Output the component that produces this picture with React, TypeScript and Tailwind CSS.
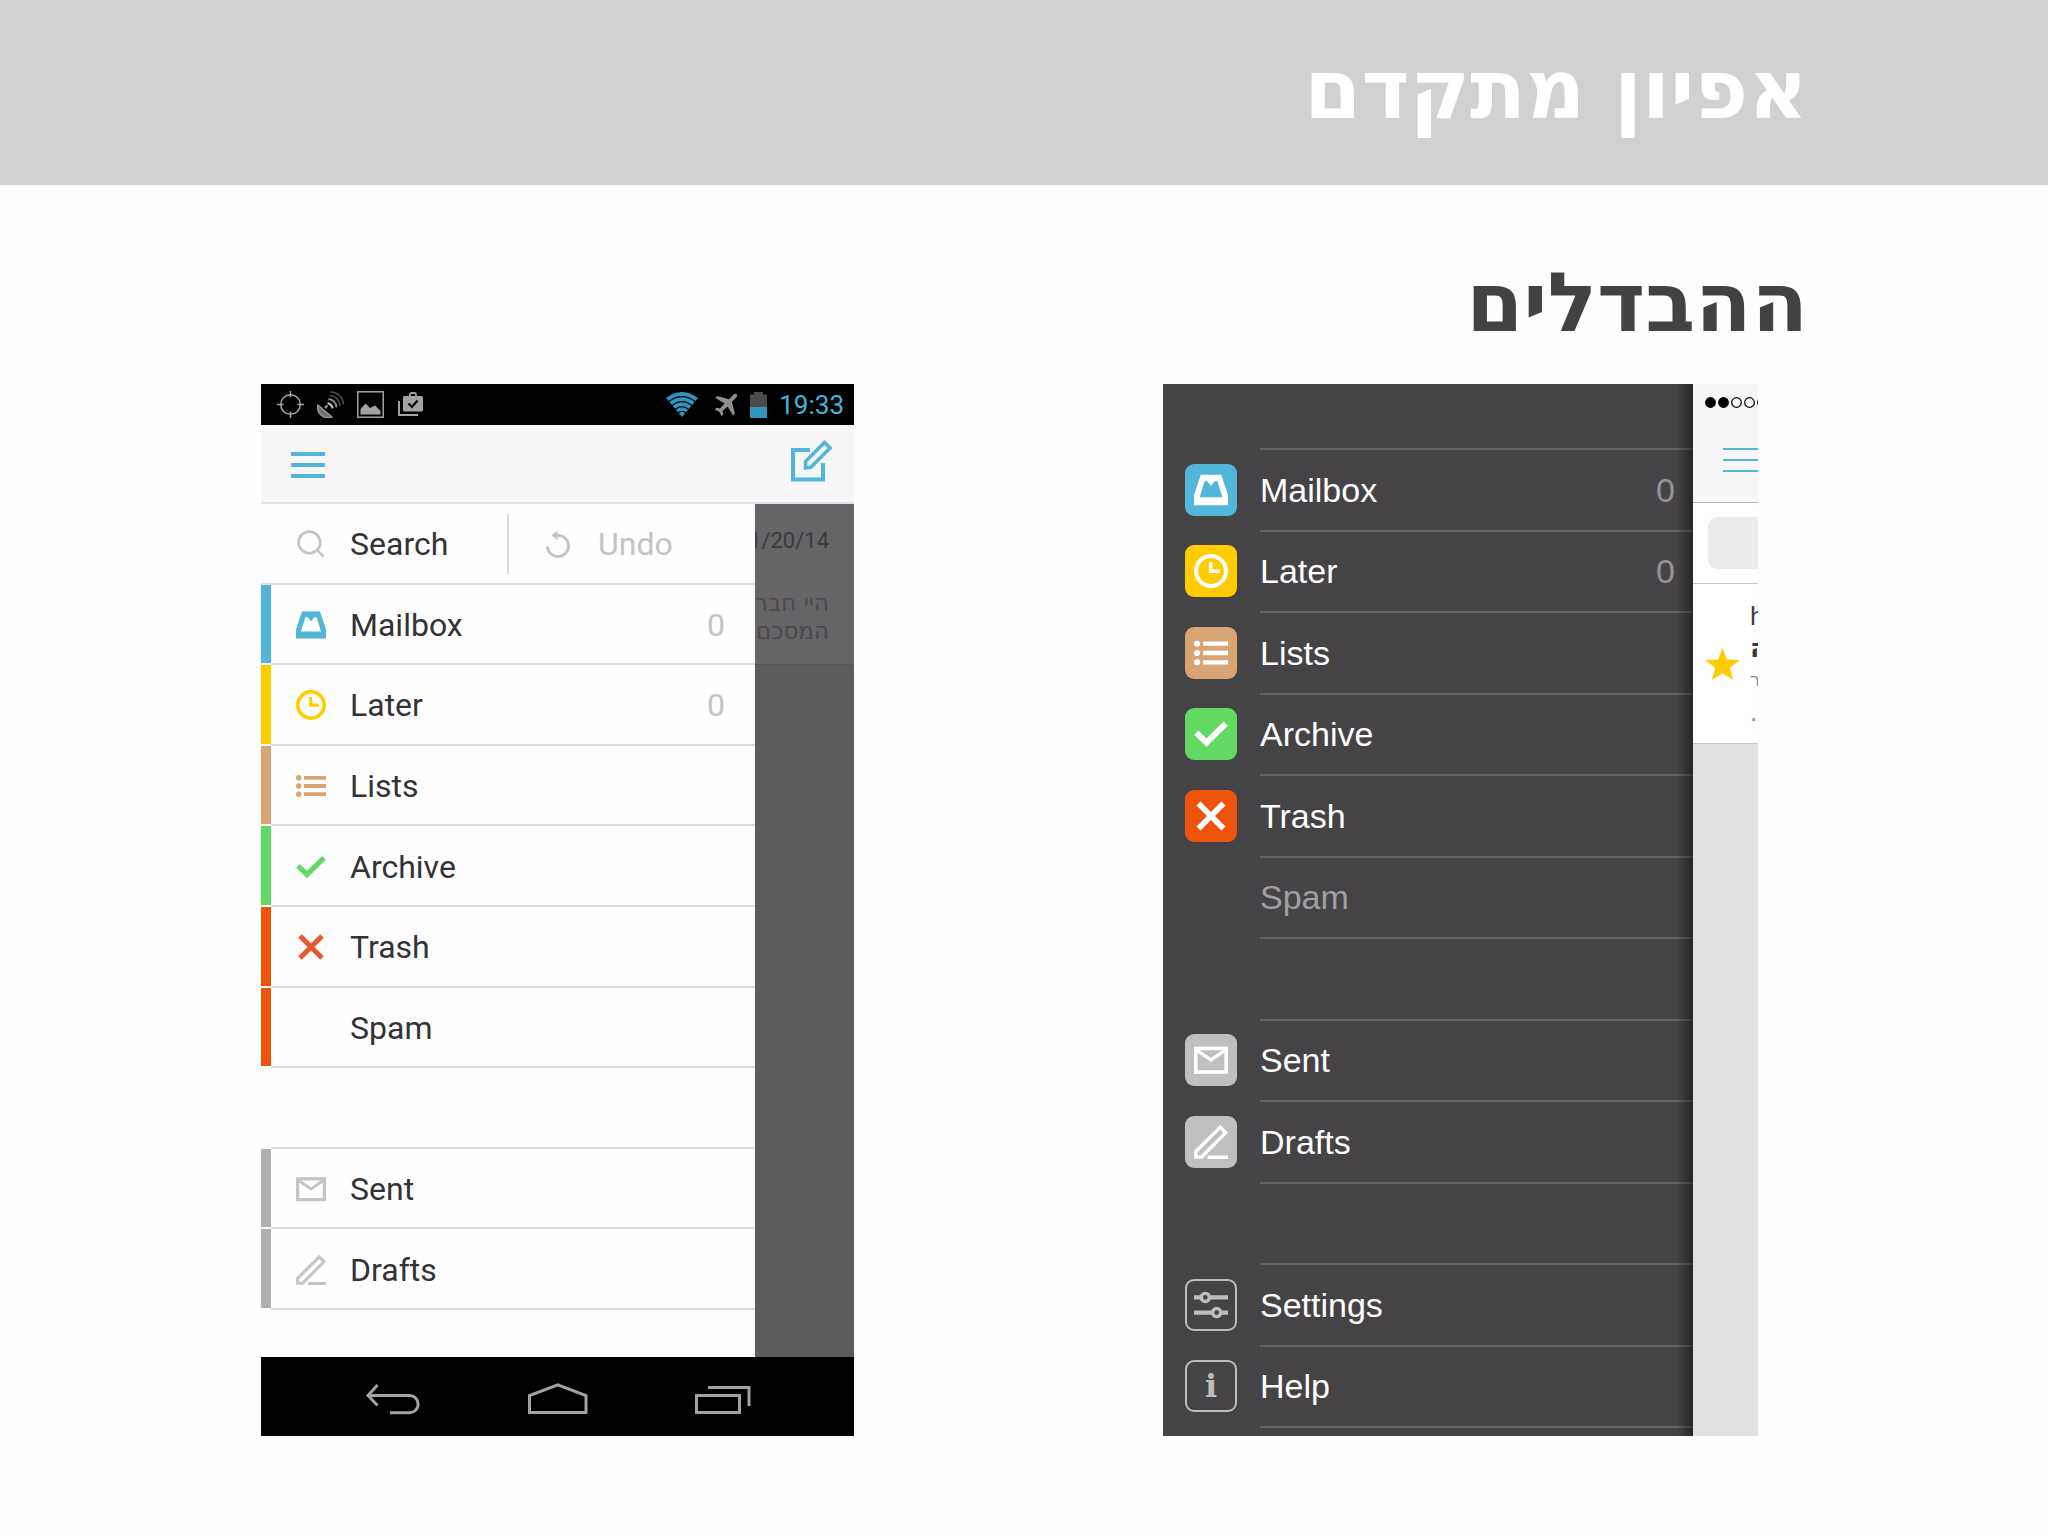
import React from 'react';

type IconName = 'mailbox' | 'clock' | 'list' | 'check' | 'cross' | 'envelope' | 'pencil' | 'sliders';

interface MenuItem {
  label: string;
  icon?: IconName;
  tone: string;
  count?: number;
}

const GlyphIcon: React.FC<{ name: IconName; className?: string }> = ({ name, className }) => (
  <svg viewBox="0 0 30 30" fill="none" stroke="currentColor" className={className} aria-hidden="true">
    {name === 'mailbox' && (
      <path
        d="M6 1.6H24L30 19.5V28.4H0V19.5ZM9.3 7.2L5 21.5H25L20.7 7.2H18.4L15 11.3L11.6 7.2Z"
        fill="currentColor"
        fillRule="evenodd"
        stroke="none"
      />
    )}
    {name === 'clock' && (
      <>
        <circle cx="15" cy="15" r="13.2" strokeWidth="3.6" />
        <path d="M14.7 7V15.2H23" strokeWidth="3.2" />
      </>
    )}
    {name === 'list' && (
      <>
        <path d="M8 6.8H30M8 15H30M8 23.2H30" strokeWidth="3.8" />
        <g fill="currentColor" stroke="none">
          <circle cx="2.7" cy="6.8" r="2.7" />
          <circle cx="2.7" cy="15" r="2.7" />
          <circle cx="2.7" cy="23.2" r="2.7" />
        </g>
      </>
    )}
    {name === 'check' && <path d="M2 13.8L11 22.6L28 5.8" strokeWidth="5.2" />}
    {name === 'cross' && <path d="M4 4L26 26M26 4L4 26" strokeWidth="5" />}
    {name === 'envelope' && (
      <>
        <rect x="1.6" y="4.8" width="26.8" height="20.8" strokeWidth="3.2" />
        <path d="M2 6L15 15L28 6" strokeWidth="3" />
      </>
    )}
    {name === 'pencil' && (
      <path d="M1.6 28.2V23.4L23.2 1.9L28 6.7L6.6 28.2ZM12 28.4H30" strokeWidth="3" />
    )}
    {name === 'sliders' && (
      <>
        <path d="M0 8.3H6.4M13.6 8.3H30M0 21.7H16.4M23.6 21.7H30" strokeWidth="3.6" />
        <circle cx="10" cy="8.3" r="3.6" strokeWidth="3" />
        <circle cx="20" cy="21.7" r="3.6" strokeWidth="3" />
      </>
    )}
  </svg>
);

const androidItems: (MenuItem | null)[] = [
  { label: 'Mailbox', icon: 'mailbox', tone: 'border-[#52b5da] text-[#52b5da]', count: 0 },
  { label: 'Later', icon: 'clock', tone: 'border-[#ffcc00] text-[#ffcc00]', count: 0 },
  { label: 'Lists', icon: 'list', tone: 'border-[#d8a474] text-[#d8a474]' },
  { label: 'Archive', icon: 'check', tone: 'border-[#62d962] text-[#62d962]' },
  { label: 'Trash', icon: 'cross', tone: 'border-[#ef540c] text-[#e8582a]' },
  { label: 'Spam', tone: 'border-[#ef540c]' },
  null,
  { label: 'Sent', icon: 'envelope', tone: 'border-[#b1b0b1] text-[#c4c3c5]' },
  { label: 'Drafts', icon: 'pencil', tone: 'border-[#b1b0b1] text-[#c4c3c5]' },
];

const iosItems: (MenuItem | null)[] = [
  { label: 'Mailbox', icon: 'mailbox', tone: 'bg-[#52b5da] text-white', count: 0 },
  { label: 'Later', icon: 'clock', tone: 'bg-[#ffcc00] text-white', count: 0 },
  { label: 'Lists', icon: 'list', tone: 'bg-[#d8a474] text-white' },
  { label: 'Archive', icon: 'check', tone: 'bg-[#62d962] text-white' },
  { label: 'Trash', icon: 'cross', tone: 'bg-[#ef540c] text-white' },
  { label: 'Spam', tone: '' },
  null,
  { label: 'Sent', icon: 'envelope', tone: 'bg-[#bfbec0] text-white' },
  { label: 'Drafts', icon: 'pencil', tone: 'bg-[#bfbec0] text-white' },
  null,
  { label: 'Settings', icon: 'sliders', tone: 'border-2 border-[#bdbcbe] text-[#bdbcbe]' },
  { label: 'Help', tone: 'border-2 border-[#bdbcbe] text-[#bdbcbe]' },
];

const AndroidStatusBar = () => (
  <div className="flex h-[41px] items-center justify-between bg-black pl-4 pr-2.5">
    <div className="flex items-center gap-[13px] text-[#a3a3a3]">
      <svg viewBox="0 0 27 27" className="size-[27px]" fill="none" stroke="currentColor" strokeWidth="1.5">
        <circle cx="13.5" cy="13.5" r="9.8" />
        <path d="M13.5 0V6.5M13.5 20.5V27M0 13.5H6.5M20.5 13.5H27" />
      </svg>
      <svg viewBox="0 0 27 27" className="size-[27px]" fill="none" stroke="currentColor">
        <path d="M1 14C-1 22 6 28.5 15 26Z" fill="#6f6f6f" strokeWidth="1.2" />
        <path d="M8 17L10.5 14.5" strokeWidth="2" />
        <path d="M10.5 12.2Q15 13 15.6 17.4" stroke="#c9c9c9" strokeWidth="2" />
        <path d="M11.5 8Q18.5 9 19.6 16.4" stroke="#8d8d8d" strokeWidth="1.8" />
        <path d="M12.6 4.2Q22 5.5 23.2 15M13.5 .8Q25.5 2 26.6 13.6" stroke="#4a4a4a" strokeWidth="1.6" />
      </svg>
      <svg viewBox="0 0 27 27" className="size-[27px]" fill="none" stroke="currentColor">
        <rect x=".8" y=".8" width="25.4" height="25.4" strokeWidth="1.5" />
        <path d="M3.5 23.5V18L8.5 12.5L13 17L18 14.5L23.5 20V23.5Z" fill="currentColor" stroke="none" />
      </svg>
      <svg viewBox="0 0 27 27" className="size-[27px]" fill="none" stroke="currentColor">
        <path d="M2 10V24H21" strokeWidth="2" />
        <path d="M13 5V3.5Q13 2 14.5 2H17.5Q19 2 19 3.5V5" strokeWidth="1.8" />
        <rect x="6" y="5" width="20" height="15.5" rx="1.5" fill="currentColor" stroke="none" />
        <path d="M11.5 12.5L15 16L20.5 9.5" stroke="black" strokeWidth="2.2" />
      </svg>
    </div>
    <div className="flex items-center">
      <svg viewBox="0 0 32 25" className="mr-4 h-[25px] w-8" fill="#3095bf">
        <path d="M16 25L0 6Q16 -6 32 6Z" />
        <g fill="none" stroke="black" strokeWidth="1.2">
          <path d="M2.5 9.8Q16 -.5 29.5 9.8" />
          <path d="M5.8 13.8Q16 5.5 26.2 13.8" />
          <path d="M9 17.6Q16 11.6 23 17.6" />
          <path d="M12 21Q16 17.5 20 21" />
        </g>
      </svg>
      <svg viewBox="0 0 24 24" className="mr-3 size-6" fill="#8f8d8f">
        <path d="M22.8 1.2Q21.2 .2 19.4 1.8L15 6.2L3.4 3L1.4 5L10.6 10.4L6 15.4L2.4 14.8L.8 16.4L5.2 18.8L7.6 23.2L9.2 21.6L8.6 18L13.6 13.4L19 22.6L21 20.6L17.8 9L22.2 4.6Q23.8 2.8 22.8 1.2Z" />
      </svg>
      <svg viewBox="0 0 17 26" className="mr-3 h-[26px] w-[17px]">
        <path d="M0 2.5H4V0H13V2.5H17V15H0Z" fill="#4d4a4c" />
        <path d="M0 15H17V26H0Z" fill="#3095bf" />
      </svg>
      <span className="text-[26px] leading-8 text-[#40b5df]">19:33</span>
    </div>
  </div>
);

const AndroidPhone = () => (
  <section className="flex w-[593px] shrink-0 flex-col bg-black font-['Roboto',sans-serif]">
    <AndroidStatusBar />
    <div className="flex h-[79px] items-center justify-between border-b-2 border-[#e3e1e5] bg-[#f7f7f9] pl-[30px] pr-[21px] pt-0.5">
      <button type="button" aria-label="Menu" className="flex w-[34px] flex-col gap-[7px]">
        <span className="h-1 bg-[#52b5da]" />
        <span className="h-1 bg-[#52b5da]" />
        <span className="h-1 bg-[#52b5da]" />
      </button>
      <button type="button" aria-label="Compose" className="mb-2">
        <svg viewBox="0 0 42 42" className="size-[42px]" fill="none" stroke="#52b5da" strokeWidth="4">
          <path d="M19 10H2V39.5H32V23" />
          <path d="M14.5 28V21.5L33.5 2.5L39 8L19.8 27.2Z" strokeWidth="3.6" />
        </svg>
      </button>
    </div>
    <div className="flex h-[853px]">
      <div className="w-[494px] bg-[#fefefe] text-[32px] leading-10 text-[#333236]">
        <ul className="grid h-[806px] grid-rows-10">
          <li className="flex items-center border-b-2 border-[#dcdbde] pt-0.5">
            <button type="button" className="flex h-full w-[246px] items-center pl-9">
              <svg viewBox="0 0 28 28" className="mr-[25px] size-7" fill="none" stroke="#c4c3c5" strokeWidth="2.6">
                <circle cx="12.4" cy="12.4" r="10.8" />
                <path d="M20 20L26.6 26.6" />
              </svg>
              Search
            </button>
            <span className="h-[60px] w-0.5 bg-[#dddbe0]" />
            <button type="button" disabled className="flex h-full items-center pl-9 text-[#c4c3c5]">
              <svg viewBox="0 0 28 28" className="mr-[25px] size-7" fill="none" stroke="currentColor" strokeWidth="2.8">
                <path d="M2.4 16.5A10.6 10.6 0 1 0 13 5.4H11" />
                <path d="M12.5 .6V10.2L6.4 5.2Z" fill="currentColor" stroke="none" />
              </svg>
              Undo
            </button>
          </li>
          {androidItems.map((item, idx) =>
            item ? (
              <li key={item.label} className="flex">
                <a href="#" className="flex w-full items-stretch">
                  <span className={`mb-0.5 flex w-[10px] border-l-[10px] ${item.tone}`} />
                  <span className="flex grow items-center border-b-2 border-[#dcdbde] pl-[25px] pr-[30px] pt-0.5">
                    <span className={`mr-6 flex size-[30px] ${item.tone}`}>
                      {item.icon && <GlyphIcon name={item.icon} className="size-[30px]" />}
                    </span>
                    {item.label}
                    {item.count !== undefined && <span className="ml-auto text-[#c4c3c5]">{item.count}</span>}
                  </span>
                </a>
              </li>
            ) : (
              <li key={idx} className="ml-[10px] border-b-2 border-[#dcdbde]" />
            )
          )}
        </ul>
      </div>
      {/* Dimmed message list behind the drawer */}
      <div className="flex grow flex-col bg-[#5d5b5e] text-[22px] leading-7">
        <div className="flex h-[161px] flex-col items-end overflow-hidden border-b border-[#575558] bg-[#666467] pr-[25px] pt-[23px]">
          <span className="mb-8 flex w-[74px] justify-end whitespace-nowrap overflow-hidden text-[#3b3a3c]">1/20/14</span>
          <p
            dir="rtl"
            className="w-[74px] whitespace-nowrap pt-0.5 font-['DejaVu_Sans',sans-serif] text-[23px] text-[#4b494c]"
          >
            היי חבר
            <br />
            המסכם
          </p>
        </div>
      </div>
    </div>
    <div className="flex h-[79px] items-center gap-[105px] pl-[102px] pt-1">
      <button type="button" aria-label="Back">
        <svg viewBox="0 0 60 34" className="h-[34px] w-[60px]" fill="none" stroke="#a2a1a3" strokeWidth="3">
          <path d="M14.5 3L5 13.5L14.5 23.5" />
          <path d="M5 13.5H46.5A8.6 8.6 0 0 1 46.5 30.8H27" />
        </svg>
      </button>
      <button type="button" aria-label="Home">
        <svg viewBox="0 0 60 34" className="h-[34px] w-[60px]" fill="none" stroke="#a2a1a3" strokeWidth="3">
          <path d="M1.5 30.5V13.5L29.8 2.8L58 13.5V30.5Z" />
        </svg>
      </button>
      <button type="button" aria-label="Recent apps">
        <svg viewBox="0 0 60 34" className="h-[34px] w-[60px]" fill="none" stroke="#a2a1a3" strokeWidth="3">
          <rect x="3.5" y="13.5" width="43" height="17" />
          <path d="M15 5.5H56V24" />
        </svg>
      </button>
    </div>
  </section>
);

const IosPhone = () => (
  <section className="flex h-[1052px] w-[595px] shrink-0 overflow-hidden font-['Liberation_Sans',Arial,sans-serif]">
    <div className="relative w-[530px] bg-[#454346] pt-16">
      <div className="ml-[97px] h-0.5 bg-[#636164]" />
      <ul className="grid h-[978px] grid-rows-12 text-[34px] leading-10 text-white">
        {iosItems.map((item, idx) =>
          item ? (
            <li key={item.label}>
              <a href="#" className="flex h-full items-stretch pl-[22px]">
                <span
                  className={`mb-0.5 mr-[23px] flex size-[52px] items-center justify-center self-center rounded-[9px] ${item.tone}`}
                >
                  {item.icon && <GlyphIcon name={item.icon} className="size-[34px]" />}
                  {item.label === 'Help' && (
                    <span className="font-['DejaVu_Serif',serif] text-[32px] font-bold leading-10">i</span>
                  )}
                </span>
                <span className="flex grow items-center border-b-2 border-[#636164] pr-[18px]">
                  <span className={item.label === 'Spam' ? 'text-[#a09fa1]' : ''}>{item.label}</span>
                  {item.count !== undefined && <span className="ml-auto text-[#959396]">{item.count}</span>}
                </span>
              </a>
            </li>
          ) : (
            <li key={idx} className="ml-[97px] border-b-2 border-[#636164]" />
          )
        )}
      </ul>
      {/* Shadow the sliding sheet casts on the drawer */}
      <div className="absolute inset-y-0 right-0 w-4 bg-linear-to-l from-black/45 to-transparent" />
    </div>
    <div className="flex w-[65px] flex-col overflow-hidden bg-[#e2e0e3]">
      <div className="flex h-[119px] flex-col border-b border-[#b5b3b7] bg-[#f7f7f9] pt-3">
        <svg viewBox="0 0 65 12" className="h-3 w-[65px]" fill="none" stroke="black" strokeWidth="1.2">
          <circle cx="17.5" cy="6.5" r="4.8" fill="black" />
          <circle cx="30.5" cy="6.5" r="4.8" fill="black" />
          <circle cx="43.5" cy="6.5" r="4.8" />
          <circle cx="56.5" cy="6.5" r="4.8" />
          <circle cx="69.5" cy="6.5" r="4.8" />
        </svg>
        <button type="button" aria-label="Menu" className="ml-[30px] mt-10 flex flex-col gap-[9px]">
          <span className="h-0.5 w-full bg-[#52b5da]" />
          <span className="h-0.5 w-full bg-[#52b5da]" />
          <span className="h-0.5 w-full bg-[#52b5da]" />
        </button>
      </div>
      <div className="h-[81px] border-b border-[#c9c7cb] bg-white pl-[15px] pt-[14px]">
        <input type="text" aria-label="Search" className="h-[52px] w-20 rounded-[9px] bg-[#ebebed]" />
      </div>
      <div className="flex h-[160px] items-center gap-2.5 border-b border-[#c9c7cb] bg-white pl-3">
        <svg viewBox="0 0 35 32" className="h-8 w-[35px] shrink-0" fill="#ffcc00">
          <path d="M17.5 0L21.9 11.4L35 12L24.8 19.8L28.2 32L17.5 25.2L6.8 32L10.2 19.8L0 12L13.1 11.4Z" />
        </svg>
        <div className="text-[26px] leading-8 text-[#3b393c]">
          <p>h</p>
          <p className="font-['DejaVu_Sans',sans-serif] font-bold">ה</p>
          <p className="font-['DejaVu_Sans',sans-serif] text-lg leading-8 text-[#8b898c]">ר</p>
          <p className="text-[#8b898c]">.</p>
        </div>
      </div>
    </div>
  </section>
);

export default function App() {
  return (
    <div className="min-h-screen bg-[#fefefe] font-['DejaVu_Sans','Noto_Sans',sans-serif]">
      <header dir="rtl" className="flex h-[185px] items-center bg-[#d1d1d1] pb-1.5 pr-[240px]">
        <h1 className="text-[82px] font-bold leading-[96px] text-white">אפיון מתקדם</h1>
      </header>
      <main className="pb-[100px]">
        <h2 dir="rtl" className="h-[199px] pr-[240px] pt-[70px] text-[82px] font-bold leading-[96px] text-[#424242]">
          ההבדלים
        </h2>
        <div className="flex justify-between pl-[261px] pr-[290px]">
          <AndroidPhone />
          <IosPhone />
        </div>
      </main>
    </div>
  );
}
